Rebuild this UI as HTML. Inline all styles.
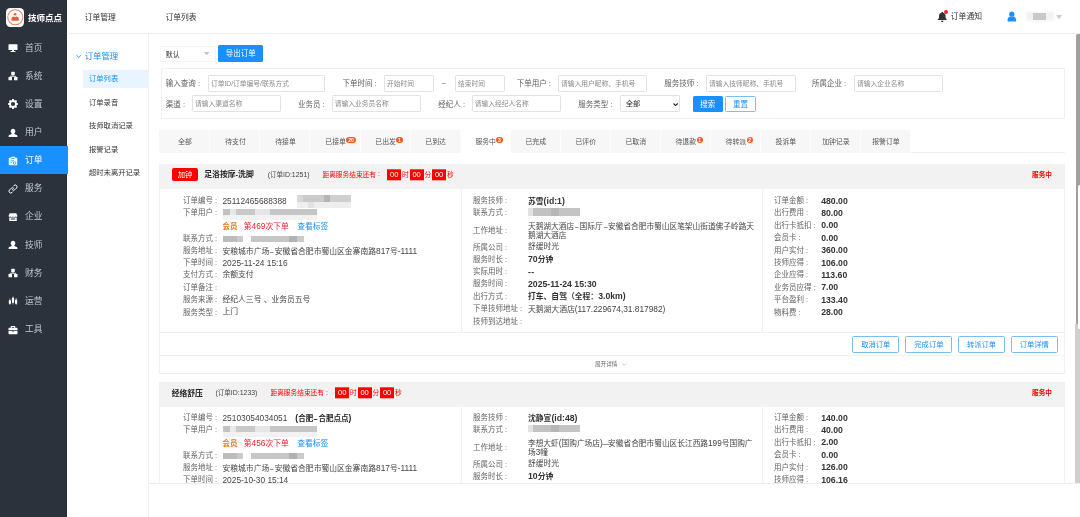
<!DOCTYPE html>
<html lang="zh-CN"><head><meta charset="utf-8"><title>订单列表</title>
<style>
*{box-sizing:border-box;margin:0;padding:0}
html,body{width:1080px;height:517px;overflow:hidden;background:#fff}
body{position:relative;filter:blur(.45px);font-family:"Liberation Sans", "Noto Sans CJK SC", sans-serif;font-size:7.5px;color:#333;-webkit-font-smoothing:antialiased}
.abs{position:absolute}
.t{position:absolute;white-space:nowrap;line-height:1;transform:translateY(-50%)}
#side{position:absolute;left:0;top:0;width:67.2px;height:517px;background:#2b323c}
#logo{position:absolute;left:5.5px;top:8px;width:18.6px;height:18.6px;background:#fff;border-radius:4.2px}
#brand{left:28px;top:17.6px;color:#fff;font-weight:bold;font-size:8.5px}
.mi{position:absolute;left:0;width:67.5px;height:28.15px}
.mi.on{background:#1890ff;width:68px}
.mi span{position:absolute;left:25px;top:14px;transform:translateY(-50%);line-height:1;font-size:8.75px;color:#c3c7cd;white-space:nowrap}
.mi.on span{color:#fff}
.mi svg{position:absolute;left:8px;top:9.6px;width:10px;height:10px}
#sub{position:absolute;left:67.5px;top:0;width:81px;height:517px;background:#fff;border-right:1px solid #f0f0f0}
#hdr{position:absolute;left:67.5px;top:0;width:1012.5px;height:33.6px;border-bottom:1px solid #eee;background:#fff}
.si{position:absolute;left:89px;font-size:7.3px;color:#333;white-space:nowrap;line-height:1;transform:translateY(-50%)}
.lbl{position:absolute;white-space:nowrap;line-height:1;transform:translateY(-50%);font-size:7.5px;color:#606060}
i.c{font-style:normal;padding-left:2.1px}
.n{font-size:1.07em}
.hy{display:inline-block;width:5.4px;text-align:center;transform:scaleX(1.9)}
b .n,.b .n{font-size:1.115em}
.inp{position:absolute;height:17.2px;border:1px solid #e2e2e2;border-radius:1.2px;background:#fff;font-size:6.75px;color:#8a8a8a;line-height:15.2px;padding-left:1.7px;white-space:nowrap;overflow:hidden}
.btn{position:absolute;padding-top:1.1px;border-radius:1.5px;font-size:7.5px;text-align:center;white-space:nowrap}
.btn.p{background:#1890ff;color:#fff}
.btn.o{background:#fff;color:#1890ff;border:1px solid #7dbcf7}
.tab{position:absolute;top:130.3px;height:22.7px;padding-left:1.2px;background:#f7f7f7;border-right:1px solid #fdfdfd;font-size:6.875px;color:#555;text-align:center;line-height:24px;white-space:nowrap}
.tab.on{background:#fff}
.bdg{position:absolute;background:#ff5722;color:#fff;border-radius:3.1px;height:6.2px;font-size:5px;line-height:6.3px;text-align:center;font-weight:bold;overflow:hidden}
.card{position:absolute;left:159.3px;width:905.7px}
.chd{position:absolute;left:0;top:0;width:100%;height:25px;background:#f2f2f2}
.cbody{position:absolute;left:0;top:25px;width:100%;border-left:1px solid #f3f3f3;border-right:1px solid #f3f3f3}
.row{position:absolute;white-space:nowrap;line-height:1;transform:translateY(-50%)}
.k{position:absolute;font-size:7.5px;color:#636363;white-space:nowrap;line-height:1;transform:translateY(-50%)}
.v{position:absolute;font-size:7.8px;color:#444;white-space:nowrap;line-height:1;transform:translateY(-50%)}
.v.b{font-weight:bold;color:#333}
.blur{position:absolute;background:#d4d4d4;filter:blur(.7px)}
.cd{display:inline-block;background:#f00;color:#fff;height:11.4px;line-height:11.6px;width:13.8px;text-align:center;font-size:7.6px;vertical-align:middle;margin:0 1px;position:relative;top:-.3px}
</style></head>
<body>
<div id="side">
<div id="logo"><svg viewBox="0 0 40 40" style="position:absolute;left:0;top:0;width:100%;height:100%"><circle cx="20" cy="20" r="16.200" fill="#fff" stroke="#f2805f" stroke-width="2.200"/><circle cx="19.600" cy="13.400" r="2.900" fill="#ef5a36"/><path d="M11.800 27.500v-5.200c0-1.400.9-2.400 2.200-2.800l3.300-1.300 2.300 1.600 2.300-1.600 3.300 1.300c1.300.4 2.200 1.400 2.200 2.800v5.200z" fill="#ef5a36"/></svg></div>
<div class="t" id="brand">技师点点</div>
<div class="mi" style="top:33.5px"><svg viewBox="0 0 20 20"><rect x="1" y="2.5" width="18" height="11.5" rx="1" fill="#fff"/><rect x="8" y="14" width="4" height="2.5" fill="#fff"/><rect x="5" y="16.2" width="10" height="1.8" rx=".5" fill="#fff"/></svg><span>首页</span></div>
<div class="mi" style="top:61.65px"><svg viewBox="0 0 20 20"><rect x="6.5" y="1.5" width="7" height="6.5" rx="1" fill="#fff"/><rect x="1" y="12" width="7" height="6.5" rx="1" fill="#fff"/><rect x="12" y="12" width="7" height="6.5" rx="1" fill="#fff"/><path d="M10 8v2.5M4.5 12v-1.5h11V12" stroke="#fff" stroke-width="1.8" fill="none"/></svg><span>系统</span></div>
<div class="mi" style="top:89.8px"><svg viewBox="0 0 20 20"><path fill="#fff" fill-rule="evenodd" d="M8.3 1h3.4l.5 2.4 1.5.7 2.1-1.3 2.4 2.4-1.3 2.1.7 1.5 2.4.5v3.4l-2.4.5-.7 1.5 1.3 2.1-2.4 2.4-2.1-1.3-1.5.7-.5 2.4H8.300l-.5-2.4-1.5-.7-2.1 1.3-2.4-2.400 1.3-2.100-.7-1.500L0 12.700V9.300l2.400-.5.7-1.500L1.800 5.200l2.400-2.400 2.100 1.300 1.500-.7zM10 6.800a4.200 4.200 0 1 0 0 8.400 4.200 4.200 0 0 0 0-8.400z" transform="translate(0 -1)"/></svg><span>设置</span></div>
<div class="mi" style="top:117.94999999999999px"><svg viewBox="0 0 20 20"><path fill="#fff" d="M10 1.500c2.700 0 4.600 2 4.600 4.800 0 2-1 3.700-2.200 4.600v.9l5 2.200c.9.400 1.400 1.200 1.400 2.100v1.900H1.200v-1.900c0-.9.500-1.700 1.400-2.100l5-2.200v-.9C6.400 10 5.400 8.300 5.400 6.300c0-2.800 1.900-4.800 4.600-4.800z"/></svg><span>用户</span></div>
<div class="mi on" style="top:146.1px"><svg viewBox="0 0 20 20"><path fill="#fff" d="M2.500 3.500h3V2.800c0-.7.600-1.300 1.300-1.300h6.400c.7 0 1.300.6 1.300 1.300v.7h3c.6 0 1 .4 1 1v13c0 .6-.4 1-1 1h-15c-.6 0-1-.4-1-1v-13c0-.6.400-1 1-1z"/><path d="M6.500 4.800h7M5 9.500h7M5 13h3.500" stroke="#1890ff" stroke-width="1.500" fill="none"/><circle cx="13.300" cy="14" r="2.600" fill="#fff" stroke="#1890ff" stroke-width="1.500"/></svg><span>订单</span></div>
<div class="mi" style="top:174.25px"><svg viewBox="0 0 20 20"><g fill="none" stroke="#fff" stroke-width="2" stroke-linecap="round"><path d="M8.500 11.500a3.600 3.600 0 0 0 5.100 0l3.400-3.400a3.600 3.600 0 0 0-5.100-5.100l-1.200 1.200"/><path d="M11.500 8.500a3.600 3.600 0 0 0-5.100 0L3 11.900a3.600 3.600 0 0 0 5.100 5.100l1.200-1.200"/></g></svg><span>服务</span></div>
<div class="mi" style="top:202.39999999999998px"><svg viewBox="0 0 20 20"><path fill="#fff" d="M3.500 2.500h13l2.300 5.200c0 1.300-1 2.300-2.200 2.300-1.200 0-2.200-1-2.200-2.200 0 1.200-1 2.200-2.200 2.200S10 9 10 7.800C10 9 9 10 7.800 10S5.600 9 5.600 7.800C5.600 9 4.600 10 3.400 10S1.200 9 1.200 7.700z"/><path fill="#fff" d="M2.500 11.200h15V17a1 1 0 0 1-1 1h-13a1 1 0 0 1-1-1zM5.500 13v1.800h9V13z" fill-rule="evenodd"/></svg><span>企业</span></div>
<div class="mi" style="top:230.54999999999998px"><svg viewBox="0 0 20 20"><path fill="#fff" d="M10 1.500c2.700 0 4.600 2 4.600 4.800 0 2-1 3.700-2.200 4.600v.9l5 2.200c.9.400 1.400 1.200 1.400 2.100v1.900H1.200v-1.900c0-.9.500-1.700 1.400-2.100l5-2.200v-.9C6.400 10 5.400 8.300 5.400 6.300c0-2.800 1.900-4.800 4.600-4.800z"/></svg><span>技师</span></div>
<div class="mi" style="top:258.7px"><svg viewBox="0 0 20 20"><rect x="6.5" y="1.5" width="7" height="6.5" rx="1" fill="#fff"/><rect x="1" y="12" width="7" height="6.5" rx="1" fill="#fff"/><rect x="12" y="12" width="7" height="6.5" rx="1" fill="#fff"/><path d="M10 8v2.5M4.5 12v-1.5h11V12" stroke="#fff" stroke-width="1.8" fill="none"/></svg><span>财务</span></div>
<div class="mi" style="top:286.85px"><svg viewBox="0 0 20 20"><g fill="#fff"><rect x="1.600" y="8" width="4.400" height="8" rx="2.200"/><rect x="7.800" y="3" width="4.400" height="11" rx="2.200"/><rect x="14" y="7" width="4.400" height="9" rx="2.200"/><rect x="3.300" y="5" width="1" height="13"/><rect x="9.500" y="1" width="1" height="16"/><rect x="15.700" y="4" width="1" height="14"/></g></svg><span>运营</span></div>
<div class="mi" style="top:315.0px"><svg viewBox="0 0 20 20"><path fill="#fff" fill-rule="evenodd" d="M6.500 2h7c.6 0 1 .4 1 1v2.500h3c.8 0 1.500.7 1.500 1.500v3.500H1V7c0-.8.700-1.500 1.500-1.500h3V3c0-.6.400-1 1-1zM7.500 3.800v1.700h5V3.800z"/><path fill="#fff" d="M1 11.800h6.800v1.400h4.400v-1.400H19v5.200c0 .8-.7 1.500-1.500 1.500h-15C1.700 18.500 1 17.800 1 17z"/></svg><span>工具</span></div>
</div>
<div id="sub"></div>
<div id="hdr"></div>
<div class="t" style="left:84.7px;top:17.6px;font-size:7.8px;color:#333">订单管理</div>
<div class="abs" style="left:67.5px;top:33.1px;width:81px;height:1px;background:#eee"></div>
<svg class="abs" style="left:76.3px;top:53.6px;width:5.4px;height:5px" viewBox="0 0 10 8"><path d="M1 1.500l4 4.500 4-4.500" fill="none" stroke="#1890ff" stroke-width="1.500"/></svg>
<div class="t" style="left:84.7px;top:56px;font-size:8.4px;color:#1890ff">订单管理</div>
<div class="abs" style="left:82.5px;top:70px;width:66px;height:17.6px;background:#e8f4ff"></div>
<div class="si" style="top:79.2px;color:#1890ff">订单列表</div>
<div class="si" style="top:102.7px;color:#333">订单录音</div>
<div class="si" style="top:126.2px;color:#333">技师取消记录</div>
<div class="si" style="top:149.7px;color:#333">报警记录</div>
<div class="si" style="top:173.2px;color:#333">超时未离开记录</div>
<div class="t" style="left:165.4px;top:17.6px;font-size:7.8px;color:#333">订单列表</div>
<svg class="abs" style="left:936.600px;top:11.200px;width:10.600px;height:11.600px" viewBox="0 0 20 22"><path fill="#333" d="M10 1.200c1 0 1.700.7 1.700 1.600v.5c2.800.8 4.600 3.100 4.600 6.100v4l2.300 2.800v1.100H1.400v-1.100l2.300-2.800v-4c0-3 1.800-5.300 4.600-6.100v-.5c0-.9.700-1.600 1.700-1.600zM7.600 18.500h4.800c0 1.400-1.100 2.400-2.400 2.400s-2.400-1-2.400-2.400z"/></svg>
<div class="abs" style="left:943.600px;top:10px;width:4.300px;height:4.300px;border-radius:50%;background:#f5222d"></div>
<div class="t" style="left:950.8px;top:17.1px;font-size:7.8px;color:#333">订单通知</div>
<div class="abs" style="left:1002.5px;top:8px;width:18px;height:18px;border-radius:50%;background:#fff;box-shadow:0 0 2px rgba(0,0,0,.03)"></div>
<svg class="abs" style="left:1006.800px;top:11.300px;width:9.600px;height:11px" viewBox="0 0 20 22"><circle cx="10" cy="6.200" r="5.400" fill="#1890ff"/><path fill="#1890ff" d="M1.200 21.500v-3.500c0-3.800 2.800-6.300 6-6.800l2.800 1.500 2.800-1.500c3.200.5 6 3 6 6.800v3.500z"/></svg>
<div class="blur" style="left:1026px;top:12px;width:28px;height:9px;background:#f3f3f3;filter:blur(1px)"></div>
<div class="blur" style="left:1033px;top:13.400px;width:13.200px;height:6.200px;background:#c9c9c9;filter:blur(.6px)"></div>
<svg class="abs" style="left:1056.200px;top:15.400px;width:6px;height:4.200px" viewBox="0 0 10 7"><path d="M0 0h10L5 7z" fill="#cdcdcd"/></svg>
<div class="abs" style="left:159.7px;top:45.8px;width:56.300px;height:16px;border:1px solid #f4f4f4;border-radius:1px"></div>
<div class="t" style="left:165.8px;top:55px;font-size:6.9px;color:#333">默认</div>
<svg class="abs" style="left:204px;top:52.300px;width:5.400px;height:3.400px" viewBox="0 0 10 6"><path d="M0 0h10L5 6z" fill="#c2c2c2"/></svg>
<div class="btn p" style="left:218.300px;top:45.200px;width:44.700px;height:16.500px;line-height:16.500px">导出订单</div>
<div class="abs" style="left:160.5px;top:67.600px;width:904.5px;height:51.200px;border:1px solid #f0f0f0;border-radius:1px"></div>
<div class="lbl" style="left:165.8px;top:84.3px">输入查询<i class="c">:</i></div>
<div class="inp" style="left:208.3px;top:75px;width:116.4px;">订单ID/订单编号/联系方式</div>
<div class="lbl" style="left:342.5px;top:84.3px">下单时间<i class="c">:</i></div>
<div class="inp" style="left:384.2px;top:75px;width:49.6px;">开始时间</div>
<div class="lbl" style="left:441.500px;top:84.3px">~</div>
<div class="inp" style="left:455.3px;top:75px;width:49.4px;">结束时间</div>
<div class="lbl" style="left:516.7px;top:84.3px">下单用户<i class="c">:</i></div>
<div class="inp" style="left:558.3px;top:75px;width:89.2px;">请输入用户昵称、手机号</div>
<div class="lbl" style="left:664.2px;top:84.3px">服务技师<i class="c">:</i></div>
<div class="inp" style="left:706.3px;top:75px;width:89.5px;">请输入技师昵称、手机号</div>
<div class="lbl" style="left:812px;top:84.3px">所属企业<i class="c">:</i></div>
<div class="inp" style="left:854.2px;top:75px;width:88.8px;">请输入企业名称</div>
<div class="lbl" style="left:165.8px;top:104.7px">渠道<i class="c">:</i></div>
<div class="inp" style="left:192.2px;top:95.3px;width:89.1px;">请输入渠道名称</div>
<div class="lbl" style="left:298px;top:104.7px">业务员<i class="c">:</i></div>
<div class="inp" style="left:332px;top:95.3px;width:89.3px;">请输入业务员名称</div>
<div class="lbl" style="left:438.3px;top:104.7px">经纪人<i class="c">:</i></div>
<div class="inp" style="left:472px;top:95.3px;width:89.3px;">请输入经纪人名称</div>
<div class="lbl" style="left:578.3px;top:104.7px">服务类型<i class="c">:</i></div>
<div class="inp" style="left:620.3px;top:95.3px;width:60.0px;color:#222;font-size:7.2px;padding-left:4.500px">全部</div>
<svg class="abs" style="left:673.300px;top:102.500px;width:5.200px;height:3.600px" viewBox="0 0 10 7"><path d="M1 1l4 4 4-4" fill="none" stroke="#222" stroke-width="2.200"/></svg>
<div class="btn p" style="left:692.500px;top:95.800px;width:30.300px;height:16.700px;line-height:16.700px">搜索</div>
<div class="btn o" style="left:725.300px;top:95.800px;width:30.300px;height:16.700px;line-height:14.700px">重置</div>
<div class="abs" style="left:159.300px;top:152.200px;width:905.700px;height:1px;background:#efefef"></div>
<div class="tab" style="left:159.30px;width:51.13px">全部</div>
<div class="tab" style="left:210.43px;width:50.03px">待支付</div>
<div class="tab" style="left:260.46px;width:50.03px">待接单</div>
<div class="tab" style="left:310.49px;width:50.03px">已接单</div>
<div class="bdg" style="left:346.32px;top:136.600px;width:9.4px">20</div>
<div class="tab" style="left:360.52px;width:50.03px">已出发</div>
<div class="bdg" style="left:396.35px;top:136.600px;width:6.2px">1</div>
<div class="tab" style="left:410.55px;width:50.03px">已到达</div>
<div class="tab on" style="left:460.58px;width:50.03px">服务中</div>
<div class="bdg" style="left:496.41px;top:136.600px;width:6.2px">3</div>
<div class="tab" style="left:510.61px;width:50.03px">已完成</div>
<div class="tab" style="left:560.64px;width:50.03px">已评价</div>
<div class="tab" style="left:610.67px;width:50.03px">已取消</div>
<div class="tab" style="left:660.70px;width:50.03px">待退款</div>
<div class="bdg" style="left:696.53px;top:136.600px;width:6.2px">1</div>
<div class="tab" style="left:710.73px;width:50.03px">待转派</div>
<div class="bdg" style="left:746.56px;top:136.600px;width:6.2px">2</div>
<div class="tab" style="left:760.76px;width:50.03px">投诉单</div>
<div class="tab" style="left:810.79px;width:50.03px">加钟记录</div>
<div class="tab" style="left:860.82px;width:50.03px">报警订单</div>
<div class="card" style="top:163.7px;height:210.2px;">
<div class="chd"></div>
<div class="abs" style="left:0;top:25px;width:905.7px;height:144px;border:1px solid #f1f1f1;border-top:0"></div>
<div class="abs" style="left:301.500px;top:25px;width:1px;height:143.300px;background:#f1f1f1"></div>
<div class="abs" style="left:603.100px;top:25px;width:1px;height:143.300px;background:#f1f1f1"></div>
<div class="abs" style="left:0;top:169px;width:905.7px;height:41.200px;border:1px solid #f1f1f1;border-top:0"></div>
<div class="abs" style="left:0;top:191.300px;width:905.7px;height:1px;background:#f1f1f1"></div>
<div class="abs" style="left:12.4px;top:4.300px;width:26.600px;height:12.800px;background:#f00;border-radius:2px;color:#fff;font-size:7.300px;text-align:center;line-height:14.600px">加钟</div>
<div class="row" style="left:45.0px;top:11.500px;font-size:7.8px;font-weight:bold;color:#222">足浴按摩-洗脚</div>
<div class="row" style="left:108.4px;top:11.400px;font-size:6.5px;color:#444"><span class="n">(</span>订单<span class="n">ID:1251)</span></div>
<div class="row" style="left:163.2px;top:11.200px;font-size:6.7px;color:#f00">距离服务结束还有<i class="c">:</i><span style="display:inline-block;width:6.300px"></span><span class="cd">00</span>时<span class="cd">00</span>分<span class="cd">00</span>秒</div>
<div class="row" style="left:872.7px;top:11px;font-size:6.7px;font-weight:bold;color:#f00">服务中</div>
<div class="k" style="left:23.7px;top:37.5px">订单编号<i class="c">:</i></div>
<div class="v" style="left:63.2px;top:37.0px"><span class="n">25112465688388</span></div>
<div class="k" style="left:23.7px;top:49.5px">下单用户<i class="c">:</i></div>
<div class="v" style="left:63.2px;top:62.0px"><span style="color:#e6791e;font-size:7.500px;font-weight:bold">会员</span><span style="display:inline-block;width:6.300px"></span><span style="color:#f5222d;font-size:7.800px">第<span class="n">469</span>次下单</span><span style="display:inline-block;width:8.300px"></span><span style="color:#1890ff;font-size:7.800px">查看标签</span></div>
<div class="k" style="left:23.7px;top:75.3px">联系方式<i class="c">:</i></div>
<div class="k" style="left:23.7px;top:87.5px">服务地址<i class="c">:</i></div>
<div class="v" style="left:63.2px;top:87.0px">安粮城市广场<span class="hy">-</span>安徽省合肥市蜀山区金寨南路<span class="n">817</span>号<span class="n">-1111</span></div>
<div class="k" style="left:23.7px;top:99.5px">下单时间<i class="c">:</i></div>
<div class="v" style="left:63.2px;top:99.0px"><span class="n">2025-11-24 15:16</span></div>
<div class="k" style="left:23.7px;top:111.8px">支付方式<i class="c">:</i></div>
<div class="v" style="left:63.2px;top:111.3px">余额支付</div>
<div class="k" style="left:23.7px;top:124.2px">订单备注<i class="c">:</i></div>
<div class="k" style="left:23.7px;top:136.6px">服务来源<i class="c">:</i></div>
<div class="v" style="left:63.2px;top:136.1px">经纪人三号 、业务员五号</div>
<div class="k" style="left:23.7px;top:149.0px">服务类型<i class="c">:</i></div>
<div class="v" style="left:63.2px;top:148.5px">上门</div>
<div class="k" style="left:313.7px;top:37.7px">服务技师<i class="c">:</i></div>
<div class="v b" style="left:368.7px;top:37.2px">苏雪<span class="n">(id:1)</span></div>
<div class="k" style="left:313.7px;top:49.5px">联系方式<i class="c">:</i></div>
<div class="k" style="left:313.7px;top:67.5px">工作地址<i class="c">:</i></div>
<div class="v" style="left:368.7px;top:67.0px"><span style="display:block;white-space:nowrap;width:240px;line-height:9.200px;font-size:7.700px">天鹅湖大酒店<span class="hy">-</span>国际厅<span class="hy">-</span>安徽省合肥市蜀山区笔架山街道佛子岭路天<br>鹅湖大酒店</span></div>
<div class="k" style="left:313.7px;top:84.0px">所属公司<i class="c">:</i></div>
<div class="v" style="left:368.7px;top:83.5px">舒缓时光</div>
<div class="k" style="left:313.7px;top:96.1px">服务时长<i class="c">:</i></div>
<div class="v b" style="left:368.7px;top:95.6px"><span class="n">70</span>分钟</div>
<div class="k" style="left:313.7px;top:108.4px">实际用时<i class="c">:</i></div>
<div class="v b" style="left:368.7px;top:107.9px"><span class="n" style="letter-spacing:.3px">--</span></div>
<div class="k" style="left:313.7px;top:120.7px">服务时间<i class="c">:</i></div>
<div class="v b" style="left:368.7px;top:120.2px"><span class="n">2025-11-24 15:30</span></div>
<div class="k" style="left:313.7px;top:133.2px">出行方式<i class="c">:</i></div>
<div class="v b" style="left:368.7px;top:132.7px">打车、自驾（全程：<span class="n">3.0km)</span></div>
<div class="k" style="left:313.7px;top:145.5px">下单技师地址<i class="c">:</i></div>
<div class="v" style="left:368.7px;top:145.0px">天鹅湖大酒店<span class="n">(117.229674,31.817982)</span></div>
<div class="k" style="left:313.7px;top:158.3px">技师到达地址<i class="c">:</i></div>
<div class="k" style="left:614.7px;top:37.5px">订单金额<i class="c">:</i></div>
<div class="v b" style="left:661.9px;top:37.0px"><span class="n">480.00</span></div>
<div class="k" style="left:614.7px;top:49.6px">出行费用<i class="c">:</i></div>
<div class="v b" style="left:661.9px;top:49.1px"><span class="n">80.00</span></div>
<div class="k" style="left:614.7px;top:62.2px">出行卡抵扣<i class="c">:</i></div>
<div class="v b" style="left:661.9px;top:61.7px"><span class="n">0.00</span></div>
<div class="k" style="left:614.7px;top:74.7px">会员卡<i class="c">:</i></div>
<div class="v b" style="left:661.9px;top:74.2px"><span class="n">0.00</span></div>
<div class="k" style="left:614.7px;top:87.1px">用户实付<i class="c">:</i></div>
<div class="v b" style="left:661.9px;top:86.6px"><span class="n">360.00</span></div>
<div class="k" style="left:614.7px;top:99.5px">技师应得<i class="c">:</i></div>
<div class="v b" style="left:661.9px;top:99.0px"><span class="n">106.00</span></div>
<div class="k" style="left:614.7px;top:111.7px">企业应得<i class="c">:</i></div>
<div class="v b" style="left:661.9px;top:111.2px"><span class="n">113.60</span></div>
<div class="k" style="left:614.7px;top:124.0px">业务员应得<i class="c">:</i></div>
<div class="v b" style="left:661.9px;top:123.5px"><span class="n">7.00</span></div>
<div class="k" style="left:614.7px;top:136.4px">平台盈利<i class="c">:</i></div>
<div class="v b" style="left:661.9px;top:135.9px"><span class="n">133.40</span></div>
<div class="k" style="left:614.7px;top:149.0px">物料费<i class="c">:</i></div>
<div class="v b" style="left:661.9px;top:148.5px"><span class="n">28.00</span></div>
<div class="blur" style="left:137.7px;top:31.6px;width:53.8px;height:6.7px;background:linear-gradient(90deg,#d8d8d8 0 12%,#cbcbcb 12% 50%,#b4b4b4 50% 62%,#cfcfcf 62% 100%)"></div>
<div class="blur" style="left:137.7px;top:38.3px;width:53.8px;height:5.8px;background:linear-gradient(90deg,#efefef 0 20%,#e2e2e2 20% 32%,#eeeeee 32% 100%)"></div>
<div class="blur" style="left:63.3px;top:45.1px;width:94.4px;height:6.7px;background:linear-gradient(90deg,#c2c2c2 0 7%,#e8e8e8 7% 14%,#c9c9c9 14% 34%,#e6e6e6 34% 50%,#c6c6c6 50% 100%)"></div>
<div class="blur" style="left:63.3px;top:51.8px;width:94.4px;height:4.4px;background:#f2f2f2"></div>
<div class="blur" style="left:63.3px;top:72.1px;width:81.3px;height:6.7px;background:linear-gradient(90deg,#bcbcbc 0 17%,#cacaca 17% 25%,#fff 25% 34%,#c6c6c6 34% 82%,#b2b2b2 82% 91%,#cbcbcb 91% 100%)"></div>
<div class="blur" style="left:368.7px;top:44.8px;width:52.3px;height:7.2px;background:linear-gradient(90deg,#e2e2e2 0 10%,#c2c2c2 10% 45%,#b6b6b6 45% 60%,#c4c4c4 60% 100%)"></div>
<div class="btn o" style="left:693.1px;top:172.500px;width:46.8px;height:17px;line-height:14.800px;font-size:7.300px">取消订单</div>
<div class="btn o" style="left:746.0px;top:172.500px;width:47.2px;height:17px;line-height:14.800px;font-size:7.300px">完成订单</div>
<div class="btn o" style="left:798.7px;top:172.500px;width:47.0px;height:17px;line-height:14.800px;font-size:7.300px">转派订单</div>
<div class="btn o" style="left:851.5px;top:172.500px;width:47.0px;height:17px;line-height:14.800px;font-size:7.300px">订单详情</div>
<div class="row" style="left:435.7px;top:201.300px;font-size:5.600px;color:#666">展开详情</div>
<svg class="abs" style="left:463.2px;top:199.800px;width:4.600px;height:3px" viewBox="0 0 10 6"><path d="M1 1l4 4 4-4" fill="none" stroke="#999" stroke-width="1.200"/></svg>
</div>
<div class="card" style="top:382px;height:101.6px;overflow:hidden;">
<div class="chd"></div>
<div class="abs" style="left:0;top:25px;width:905.7px;height:144px;border:1px solid #f1f1f1;border-top:0"></div>
<div class="abs" style="left:301.500px;top:25px;width:1px;height:143.300px;background:#f1f1f1"></div>
<div class="abs" style="left:603.100px;top:25px;width:1px;height:143.300px;background:#f1f1f1"></div>
<div class="abs" style="left:0;top:169px;width:905.7px;height:41.200px;border:1px solid #f1f1f1;border-top:0"></div>
<div class="abs" style="left:0;top:191.300px;width:905.7px;height:1px;background:#f1f1f1"></div>
<div class="row" style="left:12.4px;top:11.500px;font-size:7.8px;font-weight:bold;color:#222">经络舒压</div>
<div class="row" style="left:56.2px;top:11.400px;font-size:6.5px;color:#444"><span class="n">(</span>订单<span class="n">ID:1233)</span></div>
<div class="row" style="left:111.2px;top:11.200px;font-size:6.7px;color:#f00">距离服务结束还有<i class="c">:</i><span style="display:inline-block;width:6.300px"></span><span class="cd">00</span>时<span class="cd">00</span>分<span class="cd">00</span>秒</div>
<div class="row" style="left:872.7px;top:11px;font-size:6.7px;font-weight:bold;color:#f00">服务中</div>
<div class="k" style="left:23.7px;top:36.0px">订单编号<i class="c">:</i></div>
<div class="v" style="left:63.2px;top:35.5px"><span class="n">25103054034051</span><span style="display:inline-block;width:8px"></span><b style="font-size:7.500px;color:#222"><span class="n">(</span>合肥<span><span class="hy">-</span></span>合肥点点<span class="n">)</span></b></div>
<div class="k" style="left:23.7px;top:48.0px">下单用户<i class="c">:</i></div>
<div class="v" style="left:63.2px;top:60.5px"><span style="color:#e6791e;font-size:7.500px;font-weight:bold">会员</span><span style="display:inline-block;width:6.300px"></span><span style="color:#f5222d;font-size:7.800px">第<span class="n">456</span>次下单</span><span style="display:inline-block;width:8.300px"></span><span style="color:#1890ff;font-size:7.800px">查看标签</span></div>
<div class="k" style="left:23.7px;top:73.8px">联系方式<i class="c">:</i></div>
<div class="k" style="left:23.7px;top:86.0px">服务地址<i class="c">:</i></div>
<div class="v" style="left:63.2px;top:85.5px">安粮城市广场<span class="hy">-</span>安徽省合肥市蜀山区金寨南路<span class="n">817</span>号<span class="n">-1111</span></div>
<div class="k" style="left:23.7px;top:98.0px">下单时间<i class="c">:</i></div>
<div class="v" style="left:63.2px;top:97.5px"><span class="n">2025-10-30 15:14</span></div>
<div class="k" style="left:313.7px;top:36.2px">服务技师<i class="c">:</i></div>
<div class="v b" style="left:368.7px;top:35.7px">沈静宣<span class="n">(id:48)</span></div>
<div class="k" style="left:313.7px;top:48.0px">联系方式<i class="c">:</i></div>
<div class="k" style="left:313.7px;top:66.0px">工作地址<i class="c">:</i></div>
<div class="v" style="left:368.7px;top:65.5px"><span style="display:block;white-space:nowrap;width:240px;line-height:9.200px;font-size:7.700px">李想大虾<span class="n">(</span>国购广场店<span class="n">)</span><span class="hy"><span class="hy">-</span></span>安徽省合肥市蜀山区长江西路<span class="n">199</span>号国购广<br>场<span class="n">3</span>幢</span></div>
<div class="k" style="left:313.7px;top:82.5px">所属公司<i class="c">:</i></div>
<div class="v" style="left:368.7px;top:82.0px">舒缓时光</div>
<div class="k" style="left:313.7px;top:94.6px">服务时长<i class="c">:</i></div>
<div class="v b" style="left:368.7px;top:94.1px"><span class="n">10</span>分钟</div>
<div class="k" style="left:614.7px;top:36.0px">订单金额<i class="c">:</i></div>
<div class="v b" style="left:661.9px;top:35.5px"><span class="n">140.00</span></div>
<div class="k" style="left:614.7px;top:48.1px">出行费用<i class="c">:</i></div>
<div class="v b" style="left:661.9px;top:47.6px"><span class="n">40.00</span></div>
<div class="k" style="left:614.7px;top:60.7px">出行卡抵扣<i class="c">:</i></div>
<div class="v b" style="left:661.9px;top:60.2px"><span class="n">2.00</span></div>
<div class="k" style="left:614.7px;top:73.2px">会员卡<i class="c">:</i></div>
<div class="v b" style="left:661.9px;top:72.7px"><span class="n">0.00</span></div>
<div class="k" style="left:614.7px;top:85.6px">用户实付<i class="c">:</i></div>
<div class="v b" style="left:661.9px;top:85.1px"><span class="n">126.00</span></div>
<div class="k" style="left:614.7px;top:98.0px">技师应得<i class="c">:</i></div>
<div class="v b" style="left:661.9px;top:97.5px"><span class="n">106.16</span></div>
<div class="blur" style="left:63.3px;top:43.6px;width:94.4px;height:6.7px;background:linear-gradient(90deg,#c2c2c2 0 7%,#e8e8e8 7% 14%,#c9c9c9 14% 34%,#e6e6e6 34% 50%,#c6c6c6 50% 100%)"></div>
<div class="blur" style="left:63.3px;top:50.3px;width:94.4px;height:4.4px;background:#f2f2f2"></div>
<div class="blur" style="left:63.3px;top:70.6px;width:81.3px;height:6.7px;background:linear-gradient(90deg,#bcbcbc 0 17%,#cacaca 17% 25%,#fff 25% 34%,#c6c6c6 34% 82%,#b2b2b2 82% 91%,#cbcbcb 91% 100%)"></div>
<div class="blur" style="left:368.7px;top:43.3px;width:52.3px;height:7.2px;background:linear-gradient(90deg,#e2e2e2 0 10%,#c2c2c2 10% 45%,#b6b6b6 45% 60%,#c4c4c4 60% 100%)"></div>
<div class="btn o" style="left:693.1px;top:172.500px;width:46.8px;height:17px;line-height:14.800px;font-size:7.300px">取消订单</div>
<div class="btn o" style="left:746.0px;top:172.500px;width:47.2px;height:17px;line-height:14.800px;font-size:7.300px">完成订单</div>
<div class="btn o" style="left:798.7px;top:172.500px;width:47.0px;height:17px;line-height:14.800px;font-size:7.300px">转派订单</div>
<div class="btn o" style="left:851.5px;top:172.500px;width:47.0px;height:17px;line-height:14.800px;font-size:7.300px">订单详情</div>
<div class="row" style="left:435.7px;top:201.300px;font-size:5.600px;color:#666">展开详情</div>
<svg class="abs" style="left:463.2px;top:199.800px;width:4.600px;height:3px" viewBox="0 0 10 6"><path d="M1 1l4 4 4-4" fill="none" stroke="#999" stroke-width="1.200"/></svg>
</div>
<div class="abs" style="left:148.500px;top:483.400px;width:931.500px;height:33.600px;background:#fff;border-top:1px solid #ededed"></div>
<div class="abs" style="left:1075.300px;top:324px;width:4.700px;height:159px;background:#cfcfcf"></div>
<div class="abs" style="left:1075.600px;top:33.800px;width:4.400px;height:290.400px;background:#a0a0a0;border-radius:1.500px 0 0 0"></div>
<div class="abs" style="left:1078.300px;top:184.700px;width:3px;height:144.300px;background:#fff;border-radius:1.500px 0 0 1.500px"></div>
</body></html>
